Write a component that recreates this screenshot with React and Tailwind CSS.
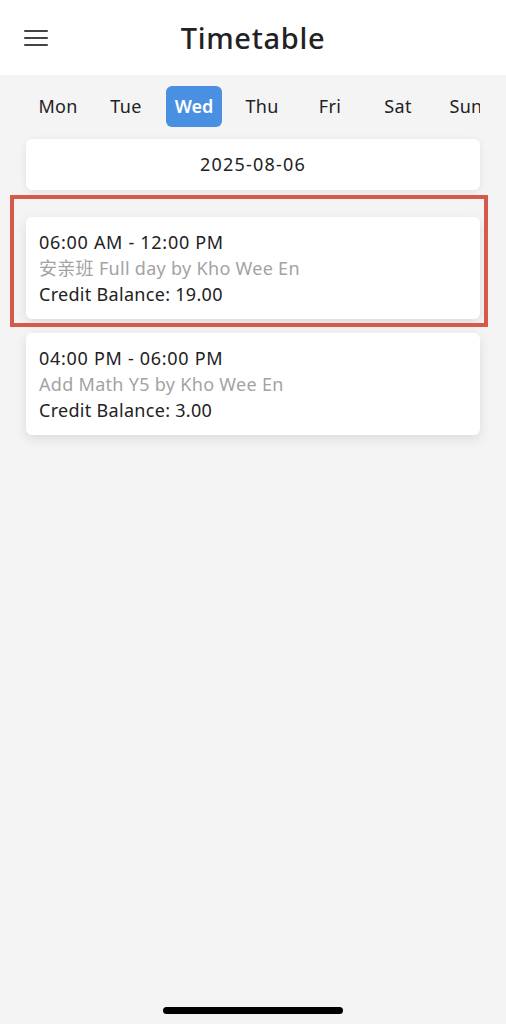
import React from "react";

const days = ["Mon", "Tue", "Wed", "Thu", "Fri", "Sat", "Sun"];

const sessions = [
  { time: "06:00 AM - 12:00 PM", title: "安亲班 Full day by Kho Wee En", credit: "19.00", marked: true },
  { time: "04:00 PM - 06:00 PM", title: "Add Math Y5 by Kho Wee En", credit: "3.00" },
];

const App = () => {
  return (
    <div
      className="relative w-[506px] h-[1024px] overflow-hidden bg-[#f4f4f4] text-[#222]"
      style={{ fontFamily: '"Noto Sans", "Noto Sans CJK SC", sans-serif' }}
    >
      {/* Header */}
      <div className="h-[75px] bg-white flex items-center relative">
        <button className="absolute left-[24px] top-[30px] w-[24px] h-[16px] flex flex-col justify-between">
          <span className="block h-[2px] w-full bg-[#444] rounded"></span>
          <span className="block h-[2px] w-full bg-[#444] rounded"></span>
          <span className="block h-[2px] w-full bg-[#444] rounded"></span>
        </button>
        <h1 className="w-full text-center text-[29px] font-medium tracking-[0.7px] leading-none -mt-[1px]">
          Timetable
        </h1>
      </div>

      {/* Day tabs */}
      <div className="ml-[24px] w-[456px] overflow-hidden">
        <div className="flex pt-[11px] whitespace-nowrap">
          {days.map((d) => (
            <div key={d} className="w-[68px] shrink-0 flex justify-center">
              <div
                className={
                  d === "Wed"
                    ? "w-[56px] h-[41px] rounded-[6px] bg-[#4a90e2] text-white font-semibold flex items-center justify-center text-[18px]"
                    : "w-[56px] h-[41px] flex items-center justify-center text-[18px] tracking-[0.3px]"
                }
              >
                {d}
              </div>
            </div>
          ))}
        </div>
      </div>

      {/* Date */}
      <div className="mx-[26px] mt-[12px] h-[51px] bg-white rounded-[6px] shadow-[0_2px_8px_rgba(0,0,0,0.08)] flex items-center justify-center text-[18px] tracking-[1.2px]">
        2025-08-06
      </div>

      {/* Sessions */}
      <div className="flex flex-col gap-[14px] mt-[27px] px-[26px]">
        {sessions.map((s) => (
          <div key={s.time} className="relative">
            <div className="h-[102px] bg-white rounded-[6px] shadow-[0_4px_12px_rgba(0,0,0,0.1)] px-[13px] pt-[12px] text-[18px] leading-[26px]">
              <div className="tracking-[0.7px]">{s.time}</div>
              <div className="text-[#a3a3a3] tracking-[0.3px]">{s.title}</div>
              <div className="tracking-[0.3px]">Credit Balance: {s.credit}</div>
            </div>
            {s.marked && (
              <div className="absolute left-[-16px] right-[-8px] top-[-22px] bottom-[-8px] border-[4px] border-[#d65a4c] pointer-events-none"></div>
            )}
          </div>
        ))}
      </div>

      {/* Home indicator */}
      <div className="absolute left-[163px] top-[1007px] w-[180px] h-[7px] rounded-full bg-black"></div>
    </div>
  );
};

export default App;
